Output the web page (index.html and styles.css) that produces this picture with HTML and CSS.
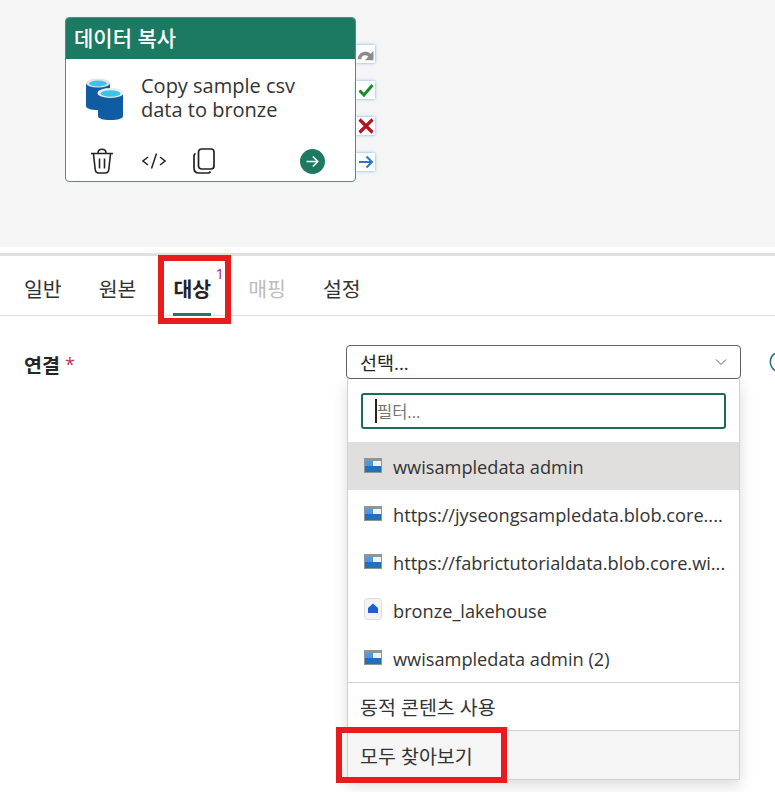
FILE: index.html
```html
<!DOCTYPE html>
<html lang="ko">
<head>
<meta charset="utf-8">
<title>데이터 복사</title>
<link rel="stylesheet" href="styles.css">
</head>
<body>
<section class="canvas">
  <div class="card">
    <div class="card-head">데이터 복사</div>
    <div class="card-body">
      <svg class="db" width="40" height="42" viewBox="0 0 40 42">
        <path d="M1 5v23c0 2.500 5 4 12 4s12-1.500 12-4V5z" fill="#0f5ca3"/>
        <ellipse cx="13" cy="5" rx="12" ry="4.500" fill="#dfe6ea"/>
        <ellipse cx="13" cy="5.500" rx="9" ry="3" fill="#3cc3ea"/>
        <path d="M13 15v23c0 2.500 5 4 12.500 4S38 40.500 38 38V15z" fill="#0f5ca3"/>
        <ellipse cx="25.500" cy="15" rx="13" ry="5" fill="#e6edf0"/>
        <ellipse cx="25.500" cy="15.500" rx="10" ry="3.200" fill="#3cc3ea"/>
      </svg>
      <div class="card-title">Copy sample csv<br>data to bronze</div>
    </div>
    <div class="card-actions">
      <svg class="act" width="24" height="26" viewBox="0 0 24 26" fill="none" stroke="#242424" stroke-width="1.600"><path d="M1 5.500h22M8 5c0-5 8-5 8 0M3.500 6l1.700 15.500c.2 2 1.500 3.500 3.500 3.500h6.600c2 0 3.300-1.500 3.500-3.500L20.500 6M9.500 10.500v10M14.500 10.500v10"/></svg>
      <svg class="act" width="24" height="18" viewBox="0 0 24 18" fill="none" stroke="#242424" stroke-width="1.500"><path d="M6 5 1 9l5 4M18 5l5 4-5 4M14.500 1.500l-5 15"/></svg>
      <svg class="act" width="22" height="26" viewBox="0 0 22 26" fill="none" stroke="#242424" stroke-width="1.700"><rect x="5.500" y="1" width="15.500" height="20" rx="3"/><path d="M2.500 5.500C1.500 6 1 7 1 8v12c0 3 2 5 5 5h9c1 0 2-.5 2.500-1.500"/></svg>
      <svg class="go" width="25" height="25" viewBox="0 0 25 25"><circle cx="12.500" cy="12.500" r="12.500" fill="#1c7a63"/><path d="M6.500 12.500h11M12.800 7.500l5 5-5 5" fill="none" stroke="#fff" stroke-width="1.500"/></svg>
    </div>
    <div class="ports">
      <div class="port port-redo"><svg width="18" height="14" viewBox="0 0 18 15"><path d="M0 11C1 3 9 1 14 5l3-3v10H8l3.500-4C8 5.500 4 7 4 11z" fill="#8c8c8c"/></svg></div>
      <div class="port"><svg width="16" height="14" viewBox="0 0 16 14"><path d="M1.500 7.500 6 12l8.500-10" fill="none" stroke="#1b8a2b" stroke-width="3"/></svg></div>
      <div class="port"><svg width="16" height="16" viewBox="0 0 16 16"><path d="m1.500 1.500 13 13M14.500 1.500l-13 13" fill="none" stroke="#b3141d" stroke-width="3.200"/></svg></div>
      <div class="port"><svg width="16" height="14" viewBox="0 0 16 14"><path d="M1 7h13M8.500 1.500 14 7l-5.500 5.500" fill="none" stroke="#2479d1" stroke-width="2"/></svg></div>
    </div>
  </div>
</section>

<section class="panel">
  <nav class="tabs">
    <span class="tab">일반</span>
    <span class="tab">원본</span>
    <span class="tab active">대상<sup class="badge">1</sup></span>
    <span class="tab disabled">매핑</span>
    <span class="tab">설정</span>
  </nav>
  <div class="form-row">
    <label class="label">연결 <span class="req">*</span></label>
    <div class="combo-wrap">
      <div class="combo">
        <span>선택...</span>
        <svg width="12" height="8" viewBox="0 0 12 8"><path d="m1 1.500 5 5 5-5" fill="none" stroke="#616161" stroke-width="1"/></svg>
      </div>
      <div class="menu">
        <div class="filter-box"><div class="filter"><span class="caret"></span>필터...</div></div>
        <div class="item selected"><svg class="ico"><use href="#conn"/></svg><span class="item-text">wwisampledata admin</span></div>
        <div class="item"><svg class="ico"><use href="#conn"/></svg><span class="item-text">https://jyseongsampledata.blob.core....</span></div>
        <div class="item"><svg class="ico"><use href="#conn"/></svg><span class="item-text">https://fabrictutorialdata.blob.core.wi...</span></div>
        <div class="item"><svg class="ico lake" viewBox="0 0 18 22"><rect x=".5" y=".5" width="17" height="21" rx="3" fill="#f3f3f3" stroke="#dcdcdc"/><path d="M4 15v-5l5-4.500 5 4.500v5z" fill="#1f5fd0"/></svg><span class="item-text">bronze_lakehouse</span></div>
        <div class="item"><svg class="ico"><use href="#conn"/></svg><span class="item-text">wwisampledata admin (2)</span></div>
        <div class="foot">동적 콘텐츠 사용</div>
        <div class="foot browse">모두 찾아보기</div>
      </div>
    </div>
    <svg class="refresh" width="20" height="24" viewBox="0 0 20 24"><path d="M7 3.500A10 10 0 1 0 13 2" fill="none" stroke="#1c6f8f" stroke-width="1.500"/></svg>
  </div>
  <div class="mark mark-tab"></div>
  <div class="mark mark-browse"></div>
</section>

<svg class="defs" width="0" height="0">
  <symbol id="conn" viewBox="0 0 18 15">
    <rect width="18" height="15" fill="#8f9499"/>
    <rect x="1" y="3" width="16" height="11" fill="#fff"/>
    <rect x="1" y="3" width="8" height="5" fill="#4a9ade"/>
    <rect x="1" y="8" width="16" height="6" fill="#1f6fc2"/>
    <rect x="9" y="3" width="8" height="5" fill="#eef3f7"/>
  </symbol>
</svg>
</body>
</html>
```
FILE: styles.css
```css
* { box-sizing: border-box; }
html, body { margin: 0; padding: 0; }
body {
  width: 775px;
  height: 792px;
  overflow: hidden;
  background: #fff;
  color: #242424;
  font-family: "Open Sans", "Noto Sans CJK KR", sans-serif;
}
.defs { position: absolute; }
.canvas {
  height: 247px;
  background: #f5f5f5;
  padding: 17px 0 0 65px;
}
.card {
  position: relative;
  width: 291px;
  height: 165px;
  background: #fff;
  border: 1px solid #3f9581;
  border-radius: 4px;
  display: flex;
  flex-direction: column;
}
.card-head {
  height: 41px;
  background: #1c7a63;
  border-radius: 3px 3px 0 0;
  color: #fff;
  font-size: 21px;
  font-weight: 500;
  line-height: 41px;
  padding-left: 8px;
}
.card-body {
  display: flex;
  gap: 15px;
  padding: 19px 0 0 19px;
  height: 87px;
}
.db { flex: none; }
.card-title {
  font-size: 20px;
  line-height: 24px;
  color: #333;
  margin: -4px 0 0 1px;
}
.card-actions {
  display: flex;
  align-items: center;
  padding-left: 24px;
  height: 30px;
}
.card-actions .act:nth-child(1) { margin-right: 28px; }
.card-actions .act:nth-child(2) { margin-right: 27px; }
.card-actions .act:nth-child(3) { margin-right: 85px; }
.ports {
  position: absolute;
  left: 290px;
  top: 27px;
  display: flex;
  flex-direction: column;
  gap: 18px;
}
.port {
  width: 19px;
  height: 18px;
  background: #fff;
  box-shadow: 0 0 3px rgba(70,140,230,.7);
  display: flex;
  align-items: center;
  justify-content: center;
}
.port-redo { align-items: flex-end; }
.panel {
  position: relative;
  margin-top: 6px;
  border-top: 3px solid #e0e0e0;
  height: 539px;
}
.tabs {
  display: flex;
  gap: 37px;
  height: 60px;
  padding-left: 24px;
  border-bottom: 1px solid #e0e0e0;
}
.tab {
  position: relative;
  font-size: 20.500px;
  line-height: 53px;
  padding-top: 7px;
  height: 60px;
  color: #333;
}
.tab.active { font-weight: 700; color: #242424; }
.tab.active::after {
  content: "";
  position: absolute;
  left: 0;
  right: 0;
  bottom: 0;
  height: 3px;
  background: #1c7a63;
}
.tab.disabled { color: #bdbdbd; }
.badge {
  position: absolute;
  left: 42px;
  top: 8px;
  font-size: 15px;
  line-height: 18px;
  font-weight: 400;
  color: #b3257a;
  vertical-align: baseline;
}
.form-row {
  display: flex;
  align-items: flex-start;
  padding: 29px 0 0 24px;
}
.label {
  flex: none;
  width: 322px;
  font-size: 19.500px;
  font-weight: 700;
  height: 34px;
  line-height: 38px;
}
.req {
  color: #c4314b;
  font-size: 18px;
  font-weight: 400;
  vertical-align: 2px;
}
.combo-wrap {
  width: 395px;
  flex: none;
}
.combo {
  height: 34px;
  border: 1px solid #616161;
  border-radius: 4px;
  display: flex;
  align-items: center;
  justify-content: space-between;
  padding: 0 13px;
  font-size: 18.500px;
}
.menu {
  width: 393px;
  margin-left: 1px;
  background: #fff;
  border: 1px solid #d1d1d1;
  border-top: 0;
  box-shadow: 0 6px 14px rgba(0,0,0,.14);
  display: flex;
  flex-direction: column;
}
.filter-box { padding: 14px 13px 13px; height: 63px; }
.filter {
  height: 36px;
  border: 2px solid #1a6b58;
  border-radius: 3px;
  font-size: 16.500px;
  color: #757575;
  display: flex;
  align-items: center;
  padding-left: 12px;
}
.caret {
  width: 2px;
  height: 24px;
  background: #242424;
  flex: none;
}
.item {
  height: 48px;
  display: flex;
  align-items: center;
  padding: 2px 0 0 16px;
  gap: 11px;
  font-size: 18.200px;
  color: #333;
}
.item.selected { background: #e0dfdd; }
.ico { width: 18px; height: 15px; flex: none; margin-bottom: 4px; }
.ico.lake { height: 22px; }
.item-text { white-space: nowrap; }
.foot {
  height: 48px;
  border-top: 1px solid #d1d1d1;
  display: flex;
  align-items: center;
  padding-left: 12px;
  font-size: 19.500px;
  color: #333;
}
.browse { background: #f5f5f5; height: 49px; }
.refresh { margin-left: 27px; margin-top: 5px; flex: none; }
.mark {
  position: absolute;
  border: 6px solid #e81c1c;
}
.mark-tab { left: 158px; top: -1px; width: 73px; height: 69px; }
.mark-browse { left: 336px; top: 471px; width: 171px; height: 56px; }
```
